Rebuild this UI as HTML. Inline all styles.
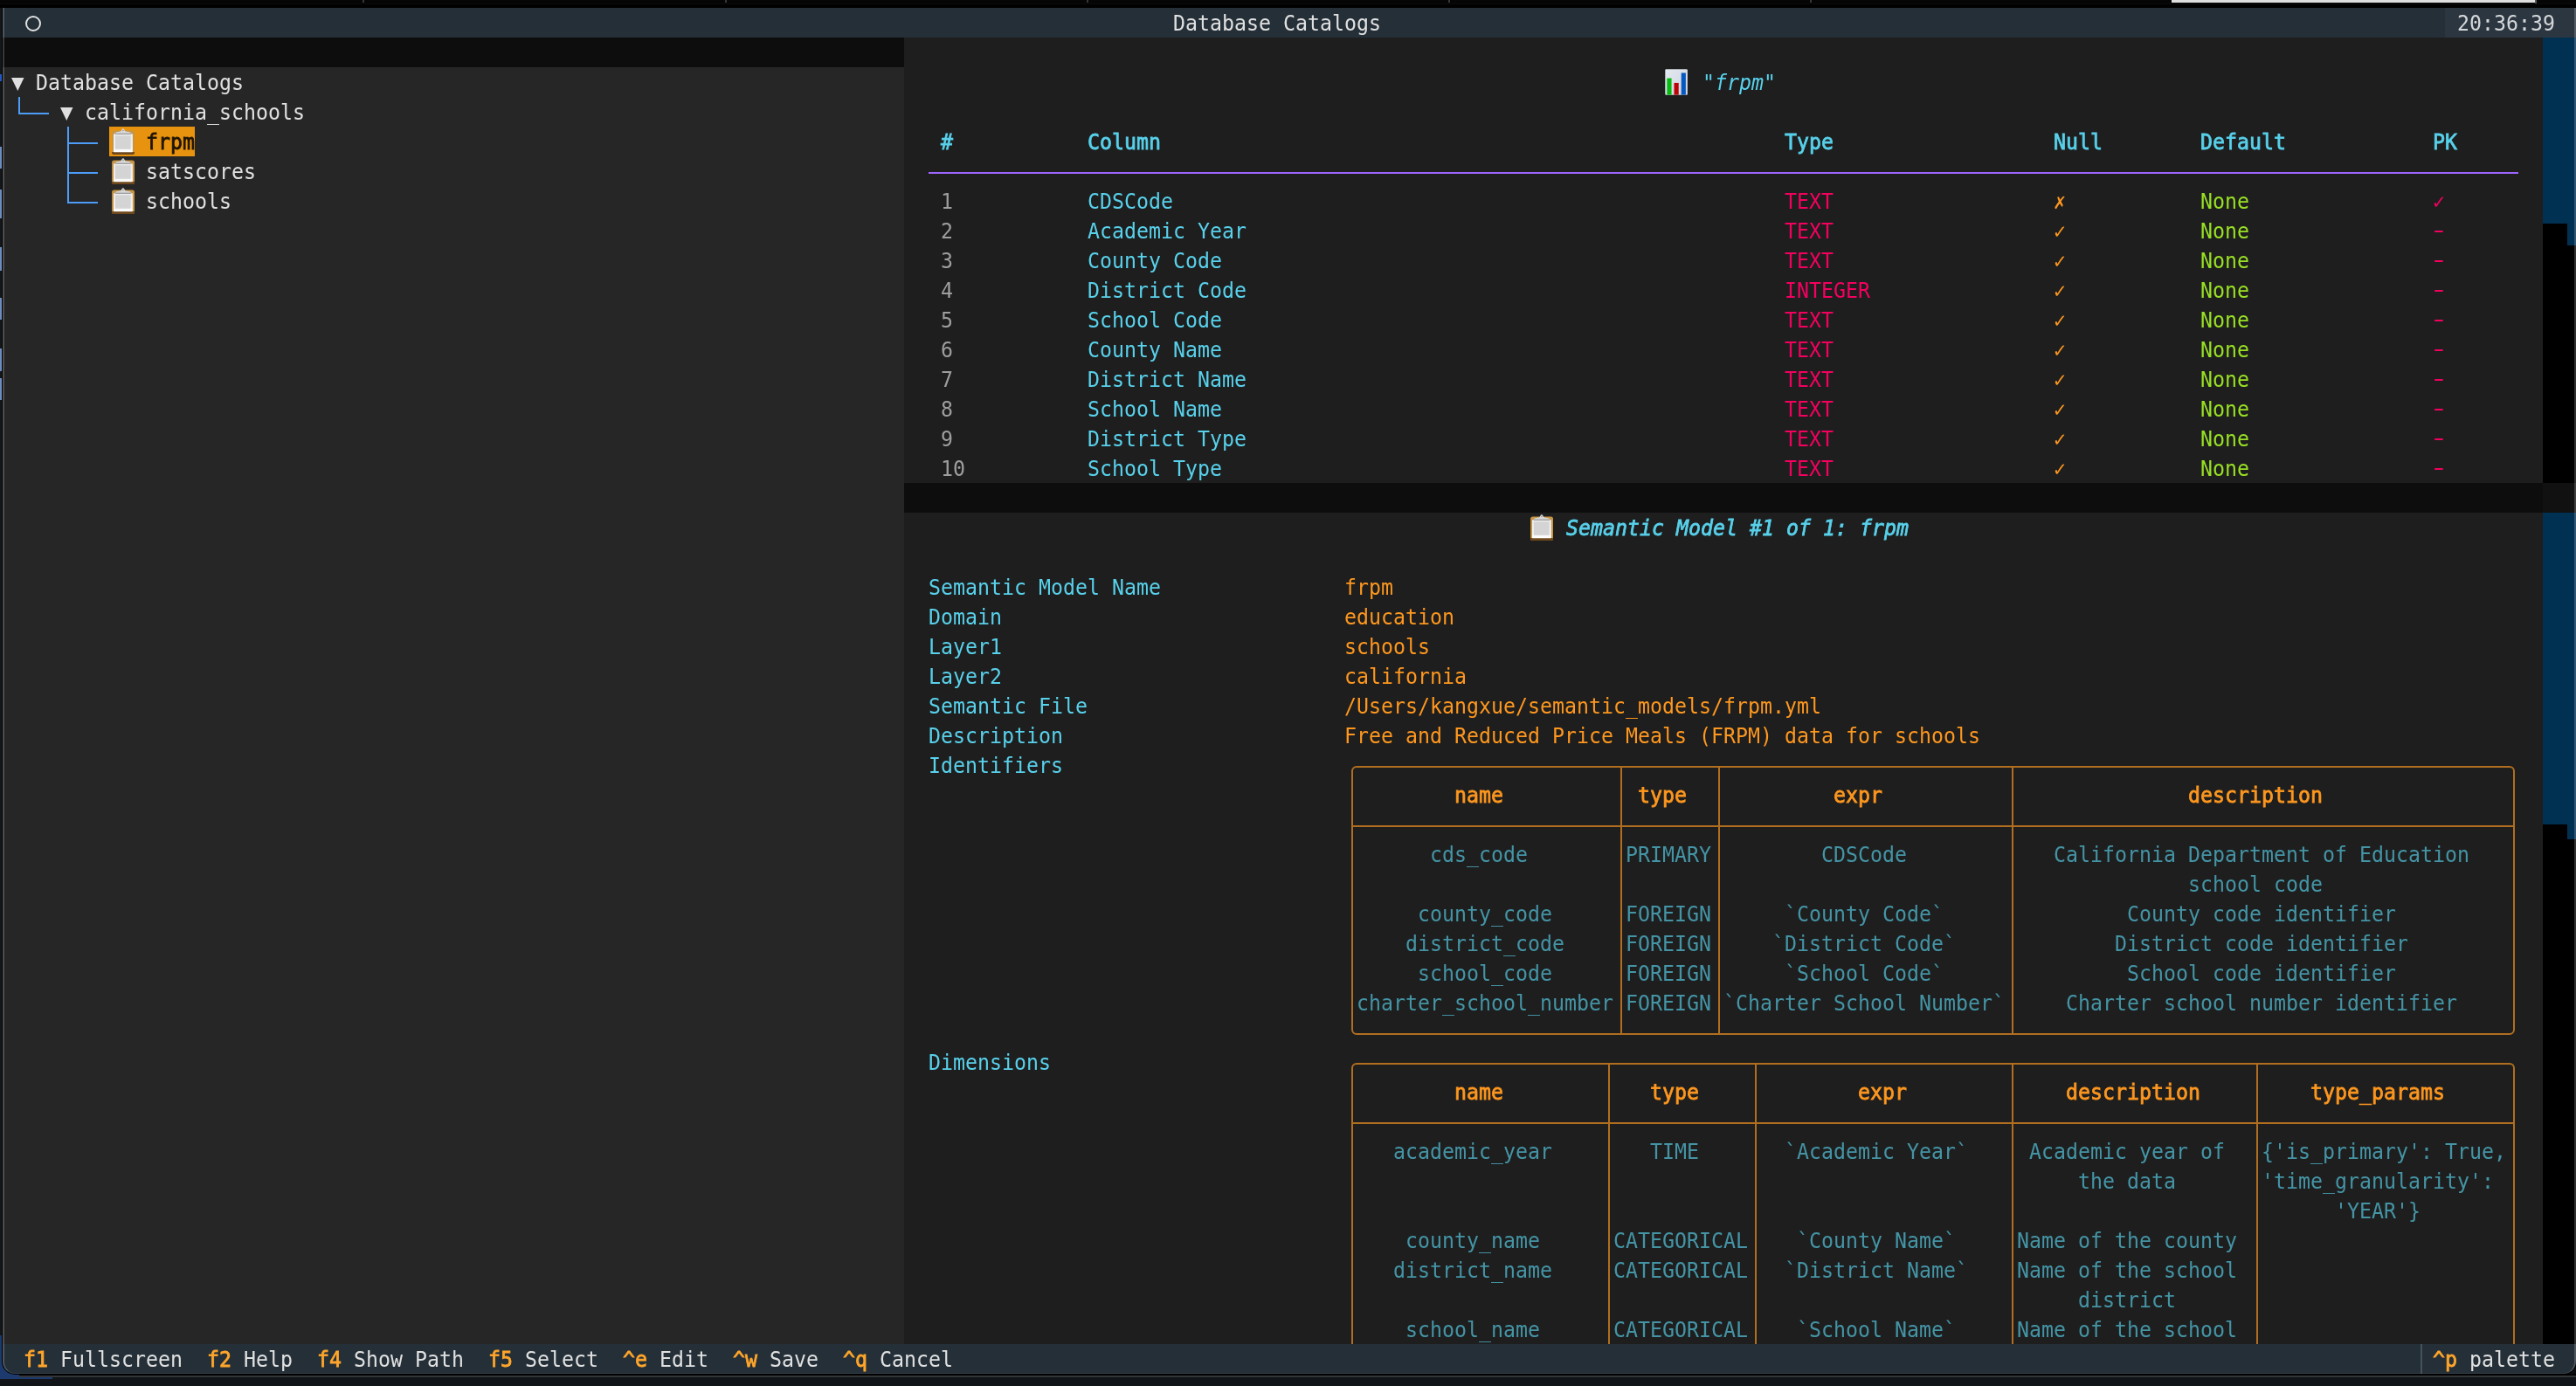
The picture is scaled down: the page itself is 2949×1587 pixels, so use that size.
<!DOCTYPE html>
<html lang="en"><head><meta charset="utf-8"><title>Database Catalogs</title>
<style>
html,body{margin:0;padding:0}
body{width:2949px;height:1587px;overflow:hidden;position:relative;background:#0c0d0f;font-family:"DejaVu Sans Mono", "Liberation Mono", monospace;font-size:23.25px}
.b{position:absolute;display:block}
#win{position:absolute;overflow:hidden;border-radius:0 0 14px 14px;box-shadow:0 0 0 1px #000}
#edge{position:absolute;left:0;top:-20px;right:0;bottom:0;border-radius:0 0 14px 14px;box-sizing:border-box;border:2px solid rgba(255,255,255,0.19);border-bottom-width:1px;border-bottom-color:rgba(255,255,255,0.08);pointer-events:none}
#txt{position:absolute;left:0;top:0;width:100%;height:100%;will-change:transform;transform:translateZ(0)}
.t{position:absolute;white-space:pre;height:34px;line-height:34px;letter-spacing:0.0px;margin-top:0.6px;font-kerning:none;font-variant-ligatures:none;transform:scaleY(1.04);transform-origin:0 25.2px}
.bd{font-weight:normal;-webkit-text-stroke:0.75px currentColor}
.i{font-style:italic}
.fg{color:#e0e0e0}
.fg2{color:#d4d7d9}
.dim{color:#9e9e9e}
.cy{color:#58d1eb}
.dc{color:#4494a5}
.mg{color:#f4005f}
.or{color:#fd971f}
.hd{color:#fd971f}
.ac{color:#ffa62b}
.gr{color:#98e024}
.hl{color:#1f1403;-webkit-text-stroke:0.75px currentColor}
.dash{transform:scaleX(1.6) scaleY(1.04) translateY(-1.2px);transform-origin:7px 25.2px}
</style></head>
<body>
<div class="b" style="left:0px;top:0px;width:2949px;height:1587px;background:#0c0d0f;"></div>
<div class="b" style="left:0px;top:0px;width:2949px;height:4px;background:#050505;"></div>
<div class="b" style="left:0px;top:4px;width:2949px;height:1px;background:#0b0b0b;"></div>
<div class="b" style="left:0px;top:5px;width:2949px;height:4px;background:#000;"></div>
<div class="b" style="left:415px;top:0px;width:2px;height:3px;background:#373737;"></div>
<div class="b" style="left:830px;top:0px;width:2px;height:3px;background:#373737;"></div>
<div class="b" style="left:1244px;top:0px;width:2px;height:3px;background:#373737;"></div>
<div class="b" style="left:1658px;top:0px;width:2px;height:3px;background:#373737;"></div>
<div class="b" style="left:2072px;top:0px;width:2px;height:3px;background:#373737;"></div>
<div class="b" style="left:2486px;top:0px;width:416px;height:3px;background:#dedede;"></div>
<div class="b" style="left:2902px;top:0px;width:2px;height:4px;background:#555;"></div>
<div class="b" style="left:0px;top:1573px;width:2949px;height:2px;background:#000;"></div>
<div class="b" style="left:0px;top:1575px;width:2949px;height:2px;background:#333536;"></div>
<div class="b" style="left:0px;top:1577px;width:2949px;height:10px;background:#111418;"></div>
<div class="b" style="left:0px;top:9px;width:3px;height:1520px;background:#14181b;"></div>
<div class="b" style="left:0px;top:1529px;width:3px;height:50px;background:#1d3a6e;"></div>
<div class="b" style="left:0px;top:85px;width:3px;height:8px;background:#2457c5;"></div>
<div class="b" style="left:0px;top:168px;width:3px;height:25px;background:#6f8cc0;"></div>
<div class="b" style="left:0px;top:217px;width:3px;height:33px;background:#6f8cc0;"></div>
<div class="b" style="left:0px;top:283px;width:3px;height:27px;background:#6f8cc0;"></div>
<div class="b" style="left:0px;top:341px;width:3px;height:25px;background:#6f8cc0;"></div>
<div class="b" style="left:0px;top:399px;width:3px;height:26px;background:#6f8cc0;"></div>
<div class="b" style="left:0px;top:433px;width:3px;height:25px;background:#6f8cc0;"></div>
<div class="b" style="left:0px;top:1555px;width:22px;height:24px;background:#1d3a6e;"></div>
<div class="b" style="left:0px;top:1577px;width:60px;height:2px;background:#1d3a6e;"></div>
<div id="win" style="left:3px;top:9px;width:2946px;height:1564px;background:#1e1e1e">
<div class="b" style="left:0px;top:0px;width:2946px;height:34px;background:#242f38;"></div>
<div class="b" style="left:2796px;top:0px;width:150px;height:34px;background:#2c3640;"></div>
<div class="b" style="left:0px;top:34px;width:1032px;height:34px;background:#0d0d0d;"></div>
<div class="b" style="left:0px;top:68px;width:1032px;height:1462px;background:#262626;"></div>
<div class="b" style="left:1032px;top:544px;width:1914px;height:34px;background:#0d0d0d;"></div>
<div class="b" style="left:2908px;top:544px;width:38px;height:34px;background:#111111;"></div>
<div class="b" style="left:2908px;top:34px;width:38px;height:510px;background:#000000;"></div>
<div class="b" style="left:2908px;top:34px;width:28px;height:212.5px;background:#003052;"></div>
<div class="b" style="left:2936px;top:34px;width:10px;height:238px;background:#003052;"></div>
<div class="b" style="left:2908px;top:578px;width:38px;height:952px;background:#000000;"></div>
<div class="b" style="left:2908px;top:578px;width:28px;height:356.5px;background:#003052;"></div>
<div class="b" style="left:2936px;top:578px;width:10px;height:374px;background:#003052;"></div>
<div class="b" style="left:0px;top:1530px;width:2946px;height:34px;background:#242f38;"></div>
<div class="b" style="left:25.5px;top:9px;width:18px;height:18px;box-sizing:border-box;border:2px solid #e0e0e0;border-radius:50%"></div>
<svg class="b" style="left:9.8px;top:80.1px" width="15" height="16" viewBox="0 0 15 16"><path d="M0 0H14.5L7.25 15Z" fill="#e0e0e0"/></svg>
<div class="b" style="left:18px;top:102px;width:2px;height:20px;background:#4d9cf7;"></div>
<div class="b" style="left:18px;top:120px;width:35px;height:2px;background:#4d9cf7;"></div>
<svg class="b" style="left:65.8px;top:114.1px" width="15" height="16" viewBox="0 0 15 16"><path d="M0 0H14.5L7.25 15Z" fill="#e0e0e0"/></svg>
<div class="b" style="left:74px;top:136px;width:2px;height:88px;background:#4d9cf7;"></div>
<div class="b" style="left:74px;top:154px;width:35px;height:2px;background:#4d9cf7;"></div>
<div class="b" style="left:74px;top:188px;width:35px;height:2px;background:#4d9cf7;"></div>
<div class="b" style="left:74px;top:222px;width:35px;height:2px;background:#4d9cf7;"></div>
<div class="b" style="left:122px;top:136px;width:98px;height:34px;background:#e8930f;"></div>
<svg class="b" style="left:125px;top:137.5px" width="27" height="31" viewBox="0 0 27 31"><defs><linearGradient id="pg8_4" x1="0" y1="0" x2="0" y2="1"><stop offset="0" stop-color="#ececec"/><stop offset="0.75" stop-color="#f2f2f2"/><stop offset="1" stop-color="#ffffff"/></linearGradient><linearGradient id="cg8_4" x1="0" y1="0" x2="0" y2="1"><stop offset="0" stop-color="#e3e6ea"/><stop offset="0.7" stop-color="#d2d5d9"/><stop offset="1" stop-color="#8d8986"/></linearGradient></defs><rect x="0.1" y="2.4" width="25.9" height="27.6" rx="2.6" fill="#c69545"/><path d="M0.1 27.1H26V27.4A2.6 2.6 0 0 1 23.4 30H2.7A2.6 2.6 0 0 1 0.1 27.4Z" fill="#6e481c"/><rect x="2" y="6.3" width="21.9" height="20.9" rx="0.6" fill="url(#pg8_4)"/><rect x="3.9" y="8.4" width="17.7" height="15.4" fill="#cfcfcf" opacity="0.85"/><path d="M4 7.1V5.6Q4 4.4 5.4 4.2L9.6 3.6Q10.6 3.4 11 2.4Q11.6 0.2 12.9 0.2Q14.2 0.2 14.8 2.4Q15.2 3.4 16.2 3.6L20.4 4.2Q21.9 4.4 21.9 5.6V7.1Z" fill="url(#cg8_4)"/><circle cx="12.9" cy="2.3" r="0.9" fill="#9a9da2"/></svg>
<svg class="b" style="left:125px;top:171.5px" width="27" height="31" viewBox="0 0 27 31"><defs><linearGradient id="pg8_5" x1="0" y1="0" x2="0" y2="1"><stop offset="0" stop-color="#ececec"/><stop offset="0.75" stop-color="#f2f2f2"/><stop offset="1" stop-color="#ffffff"/></linearGradient><linearGradient id="cg8_5" x1="0" y1="0" x2="0" y2="1"><stop offset="0" stop-color="#e3e6ea"/><stop offset="0.7" stop-color="#d2d5d9"/><stop offset="1" stop-color="#8d8986"/></linearGradient></defs><rect x="0.1" y="2.4" width="25.9" height="27.6" rx="2.6" fill="#c69545"/><path d="M0.1 27.1H26V27.4A2.6 2.6 0 0 1 23.4 30H2.7A2.6 2.6 0 0 1 0.1 27.4Z" fill="#6e481c"/><rect x="2" y="6.3" width="21.9" height="20.9" rx="0.6" fill="url(#pg8_5)"/><rect x="3.9" y="8.4" width="17.7" height="15.4" fill="#cfcfcf" opacity="0.85"/><path d="M4 7.1V5.6Q4 4.4 5.4 4.2L9.6 3.6Q10.6 3.4 11 2.4Q11.6 0.2 12.9 0.2Q14.2 0.2 14.8 2.4Q15.2 3.4 16.2 3.6L20.4 4.2Q21.9 4.4 21.9 5.6V7.1Z" fill="url(#cg8_5)"/><circle cx="12.9" cy="2.3" r="0.9" fill="#9a9da2"/></svg>
<svg class="b" style="left:125px;top:205.5px" width="27" height="31" viewBox="0 0 27 31"><defs><linearGradient id="pg8_6" x1="0" y1="0" x2="0" y2="1"><stop offset="0" stop-color="#ececec"/><stop offset="0.75" stop-color="#f2f2f2"/><stop offset="1" stop-color="#ffffff"/></linearGradient><linearGradient id="cg8_6" x1="0" y1="0" x2="0" y2="1"><stop offset="0" stop-color="#e3e6ea"/><stop offset="0.7" stop-color="#d2d5d9"/><stop offset="1" stop-color="#8d8986"/></linearGradient></defs><rect x="0.1" y="2.4" width="25.9" height="27.6" rx="2.6" fill="#c69545"/><path d="M0.1 27.1H26V27.4A2.6 2.6 0 0 1 23.4 30H2.7A2.6 2.6 0 0 1 0.1 27.4Z" fill="#6e481c"/><rect x="2" y="6.3" width="21.9" height="20.9" rx="0.6" fill="url(#pg8_6)"/><rect x="3.9" y="8.4" width="17.7" height="15.4" fill="#cfcfcf" opacity="0.85"/><path d="M4 7.1V5.6Q4 4.4 5.4 4.2L9.6 3.6Q10.6 3.4 11 2.4Q11.6 0.2 12.9 0.2Q14.2 0.2 14.8 2.4Q15.2 3.4 16.2 3.6L20.4 4.2Q21.9 4.4 21.9 5.6V7.1Z" fill="url(#cg8_6)"/><circle cx="12.9" cy="2.3" r="0.9" fill="#9a9da2"/></svg>
<svg class="b" style="left:1902.5px;top:69.5px" width="26.2" height="30.1" viewBox="0 0 27 31" preserveAspectRatio="none"><defs><linearGradient id="bc" x1="0" y1="0" x2="1" y2="1"><stop offset="0" stop-color="#e3e9f0"/><stop offset="1" stop-color="#cfd4df"/></linearGradient></defs><rect x="0.3" y="0.3" width="26.4" height="30.4" rx="1.2" fill="url(#bc)"/><rect x="2.4" y="10.9" width="5.4" height="19.6" fill="#06bb10"/><rect x="10.8" y="16.4" width="5.4" height="14.1" fill="#bb0404"/><rect x="19.3" y="4.6" width="5.3" height="25.9" fill="#0558c0"/></svg>
<div class="b" style="left:1060px;top:187.5px;width:1820px;height:2.5px;background:#9d65ff;"></div>
<svg class="b" style="left:1749px;top:579.5px" width="27" height="31" viewBox="0 0 27 31"><defs><linearGradient id="pg124_17" x1="0" y1="0" x2="0" y2="1"><stop offset="0" stop-color="#ececec"/><stop offset="0.75" stop-color="#f2f2f2"/><stop offset="1" stop-color="#ffffff"/></linearGradient><linearGradient id="cg124_17" x1="0" y1="0" x2="0" y2="1"><stop offset="0" stop-color="#e3e6ea"/><stop offset="0.7" stop-color="#d2d5d9"/><stop offset="1" stop-color="#8d8986"/></linearGradient></defs><rect x="0.1" y="2.4" width="25.9" height="27.6" rx="2.6" fill="#c69545"/><path d="M0.1 27.1H26V27.4A2.6 2.6 0 0 1 23.4 30H2.7A2.6 2.6 0 0 1 0.1 27.4Z" fill="#6e481c"/><rect x="2" y="6.3" width="21.9" height="20.9" rx="0.6" fill="url(#pg124_17)"/><rect x="3.9" y="8.4" width="17.7" height="15.4" fill="#cfcfcf" opacity="0.85"/><path d="M4 7.1V5.6Q4 4.4 5.4 4.2L9.6 3.6Q10.6 3.4 11 2.4Q11.6 0.2 12.9 0.2Q14.2 0.2 14.8 2.4Q15.2 3.4 16.2 3.6L20.4 4.2Q21.9 4.4 21.9 5.6V7.1Z" fill="url(#cg124_17)"/><circle cx="12.9" cy="2.3" r="0.9" fill="#9a9da2"/></svg>
<div class="b" style="left:1544px;top:868px;width:1332px;height:308px;box-sizing:border-box;border:2px solid #b16e1f;border-radius:6px 6px 6px 6px"></div>
<div class="b" style="left:1852px;top:868px;width:2px;height:308px;background:#b16e1f;"></div>
<div class="b" style="left:1964px;top:868px;width:2px;height:308px;background:#b16e1f;"></div>
<div class="b" style="left:2300px;top:868px;width:2px;height:308px;background:#b16e1f;"></div>
<div class="b" style="left:1544px;top:936px;width:1332px;height:2px;background:#b16e1f;"></div>
<div class="b" style="left:1544px;top:1208px;width:1332px;height:322px;box-sizing:border-box;border:2px solid #b16e1f;border-bottom:none;border-radius:6px 6px 0 0"></div>
<div class="b" style="left:1838px;top:1208px;width:2px;height:322px;background:#b16e1f;"></div>
<div class="b" style="left:2006px;top:1208px;width:2px;height:322px;background:#b16e1f;"></div>
<div class="b" style="left:2300px;top:1208px;width:2px;height:322px;background:#b16e1f;"></div>
<div class="b" style="left:2580px;top:1208px;width:2px;height:322px;background:#b16e1f;"></div>
<div class="b" style="left:1544px;top:1276px;width:1332px;height:2px;background:#b16e1f;"></div>
<div class="b" style="left:2768px;top:1530px;width:2px;height:34px;background:#44525d;"></div>
<div id="edge"></div>
<div id="txt">
<span class="t fg" style="left:1340px;top:0px">Database Catalogs</span>
<span class="t fg2" style="left:2810px;top:0px">20:36:39</span>
<span class="t fg" style="left:38px;top:68px">Database Catalogs</span>
<span class="t fg" style="left:94px;top:102px">california_schools</span>
<span class="t hl" style="left:164px;top:136px">frpm</span>
<span class="t fg" style="left:164px;top:170px">satscores</span>
<span class="t fg" style="left:164px;top:204px">schools</span>
<span class="t cy i" style="left:1946px;top:68px">"frpm"</span>
<span class="t cy bd" style="left:1074px;top:136px">#</span>
<span class="t cy bd" style="left:1242px;top:136px">Column</span>
<span class="t cy bd" style="left:2040px;top:136px">Type</span>
<span class="t cy bd" style="left:2348px;top:136px">Null</span>
<span class="t cy bd" style="left:2516px;top:136px">Default</span>
<span class="t cy bd" style="left:2782px;top:136px">PK</span>
<span class="t dim" style="left:1074px;top:204px">1</span>
<span class="t cy" style="left:1242px;top:204px">CDSCode</span>
<span class="t mg" style="left:2040px;top:204px">TEXT</span>
<span class="t or sym" style="left:2348px;top:204px">✗</span>
<span class="t gr" style="left:2516px;top:204px">None</span>
<span class="t mg sym" style="left:2782px;top:204px">✓</span>
<span class="t dim" style="left:1074px;top:238px">2</span>
<span class="t cy" style="left:1242px;top:238px">Academic Year</span>
<span class="t mg" style="left:2040px;top:238px">TEXT</span>
<span class="t or sym" style="left:2348px;top:238px">✓</span>
<span class="t gr" style="left:2516px;top:238px">None</span>
<span class="t mg dash" style="left:2782px;top:238px">-</span>
<span class="t dim" style="left:1074px;top:272px">3</span>
<span class="t cy" style="left:1242px;top:272px">County Code</span>
<span class="t mg" style="left:2040px;top:272px">TEXT</span>
<span class="t or sym" style="left:2348px;top:272px">✓</span>
<span class="t gr" style="left:2516px;top:272px">None</span>
<span class="t mg dash" style="left:2782px;top:272px">-</span>
<span class="t dim" style="left:1074px;top:306px">4</span>
<span class="t cy" style="left:1242px;top:306px">District Code</span>
<span class="t mg" style="left:2040px;top:306px">INTEGER</span>
<span class="t or sym" style="left:2348px;top:306px">✓</span>
<span class="t gr" style="left:2516px;top:306px">None</span>
<span class="t mg dash" style="left:2782px;top:306px">-</span>
<span class="t dim" style="left:1074px;top:340px">5</span>
<span class="t cy" style="left:1242px;top:340px">School Code</span>
<span class="t mg" style="left:2040px;top:340px">TEXT</span>
<span class="t or sym" style="left:2348px;top:340px">✓</span>
<span class="t gr" style="left:2516px;top:340px">None</span>
<span class="t mg dash" style="left:2782px;top:340px">-</span>
<span class="t dim" style="left:1074px;top:374px">6</span>
<span class="t cy" style="left:1242px;top:374px">County Name</span>
<span class="t mg" style="left:2040px;top:374px">TEXT</span>
<span class="t or sym" style="left:2348px;top:374px">✓</span>
<span class="t gr" style="left:2516px;top:374px">None</span>
<span class="t mg dash" style="left:2782px;top:374px">-</span>
<span class="t dim" style="left:1074px;top:408px">7</span>
<span class="t cy" style="left:1242px;top:408px">District Name</span>
<span class="t mg" style="left:2040px;top:408px">TEXT</span>
<span class="t or sym" style="left:2348px;top:408px">✓</span>
<span class="t gr" style="left:2516px;top:408px">None</span>
<span class="t mg dash" style="left:2782px;top:408px">-</span>
<span class="t dim" style="left:1074px;top:442px">8</span>
<span class="t cy" style="left:1242px;top:442px">School Name</span>
<span class="t mg" style="left:2040px;top:442px">TEXT</span>
<span class="t or sym" style="left:2348px;top:442px">✓</span>
<span class="t gr" style="left:2516px;top:442px">None</span>
<span class="t mg dash" style="left:2782px;top:442px">-</span>
<span class="t dim" style="left:1074px;top:476px">9</span>
<span class="t cy" style="left:1242px;top:476px">District Type</span>
<span class="t mg" style="left:2040px;top:476px">TEXT</span>
<span class="t or sym" style="left:2348px;top:476px">✓</span>
<span class="t gr" style="left:2516px;top:476px">None</span>
<span class="t mg dash" style="left:2782px;top:476px">-</span>
<span class="t dim" style="left:1074px;top:510px">10</span>
<span class="t cy" style="left:1242px;top:510px">School Type</span>
<span class="t mg" style="left:2040px;top:510px">TEXT</span>
<span class="t or sym" style="left:2348px;top:510px">✓</span>
<span class="t gr" style="left:2516px;top:510px">None</span>
<span class="t mg dash" style="left:2782px;top:510px">-</span>
<span class="t cy bd i" style="left:1790px;top:578px">Semantic Model #1 of 1: frpm</span>
<span class="t cy" style="left:1060px;top:646px">Semantic Model Name</span>
<span class="t or" style="left:1536px;top:646px">frpm</span>
<span class="t cy" style="left:1060px;top:680px">Domain</span>
<span class="t or" style="left:1536px;top:680px">education</span>
<span class="t cy" style="left:1060px;top:714px">Layer1</span>
<span class="t or" style="left:1536px;top:714px">schools</span>
<span class="t cy" style="left:1060px;top:748px">Layer2</span>
<span class="t or" style="left:1536px;top:748px">california</span>
<span class="t cy" style="left:1060px;top:782px">Semantic File</span>
<span class="t or" style="left:1536px;top:782px">/Users/kangxue/semantic_models/frpm.yml</span>
<span class="t cy" style="left:1060px;top:816px">Description</span>
<span class="t or" style="left:1536px;top:816px">Free and Reduced Price Meals (FRPM) data for schools</span>
<span class="t cy" style="left:1060px;top:850px">Identifiers</span>
<span class="t cy" style="left:1060px;top:1190px">Dimensions</span>
<span class="t hd bd" style="left:1662px;top:884px">name</span>
<span class="t hd bd" style="left:1872px;top:884px">type</span>
<span class="t hd bd" style="left:2096px;top:884px">expr</span>
<span class="t hd bd" style="left:2502px;top:884px">description</span>
<span class="t dc" style="left:1634px;top:952px">cds_code</span>
<span class="t dc" style="left:1858px;top:952px">PRIMARY</span>
<span class="t dc" style="left:2082px;top:952px">CDSCode</span>
<span class="t dc" style="left:2348px;top:952px">California Department of Education</span>
<span class="t dc" style="left:2502px;top:986px">school code</span>
<span class="t dc" style="left:1620px;top:1020px">county_code</span>
<span class="t dc" style="left:1858px;top:1020px">FOREIGN</span>
<span class="t dc" style="left:2040px;top:1020px">`County Code`</span>
<span class="t dc" style="left:2432px;top:1020px">County code identifier</span>
<span class="t dc" style="left:1606px;top:1054px">district_code</span>
<span class="t dc" style="left:1858px;top:1054px">FOREIGN</span>
<span class="t dc" style="left:2026px;top:1054px">`District Code`</span>
<span class="t dc" style="left:2418px;top:1054px">District code identifier</span>
<span class="t dc" style="left:1620px;top:1088px">school_code</span>
<span class="t dc" style="left:1858px;top:1088px">FOREIGN</span>
<span class="t dc" style="left:2040px;top:1088px">`School Code`</span>
<span class="t dc" style="left:2432px;top:1088px">School code identifier</span>
<span class="t dc" style="left:1550px;top:1122px">charter_school_number</span>
<span class="t dc" style="left:1858px;top:1122px">FOREIGN</span>
<span class="t dc" style="left:1970px;top:1122px">`Charter School Number`</span>
<span class="t dc" style="left:2362px;top:1122px">Charter school number identifier</span>
<span class="t hd bd" style="left:1662px;top:1224px">name</span>
<span class="t hd bd" style="left:1886px;top:1224px">type</span>
<span class="t hd bd" style="left:2124px;top:1224px">expr</span>
<span class="t hd bd" style="left:2362px;top:1224px">description</span>
<span class="t hd bd" style="left:2642px;top:1224px">type_params</span>
<span class="t dc" style="left:1592px;top:1292px">academic_year</span>
<span class="t dc" style="left:1886px;top:1292px">TIME</span>
<span class="t dc" style="left:2040px;top:1292px">`Academic Year`</span>
<span class="t dc" style="left:2320px;top:1292px">Academic year of</span>
<span class="t dc" style="left:2586px;top:1292px">{'is_primary': True,</span>
<span class="t dc" style="left:2376px;top:1326px">the data</span>
<span class="t dc" style="left:2586px;top:1326px">'time_granularity':</span>
<span class="t dc" style="left:2670px;top:1360px">'YEAR'}</span>
<span class="t dc" style="left:1606px;top:1394px">county_name</span>
<span class="t dc" style="left:1844px;top:1394px">CATEGORICAL</span>
<span class="t dc" style="left:2054px;top:1394px">`County Name`</span>
<span class="t dc" style="left:2306px;top:1394px">Name of the county</span>
<span class="t dc" style="left:1592px;top:1428px">district_name</span>
<span class="t dc" style="left:1844px;top:1428px">CATEGORICAL</span>
<span class="t dc" style="left:2040px;top:1428px">`District Name`</span>
<span class="t dc" style="left:2306px;top:1428px">Name of the school</span>
<span class="t dc" style="left:2376px;top:1462px">district</span>
<span class="t dc" style="left:1606px;top:1496px">school_name</span>
<span class="t dc" style="left:1844px;top:1496px">CATEGORICAL</span>
<span class="t dc" style="left:2054px;top:1496px">`School Name`</span>
<span class="t dc" style="left:2306px;top:1496px">Name of the school</span>
<span class="t ac bd" style="left:24px;top:1530px">f1</span>
<span class="t fg" style="left:66px;top:1530px">Fullscreen</span>
<span class="t ac bd" style="left:234px;top:1530px">f2</span>
<span class="t fg" style="left:276px;top:1530px">Help</span>
<span class="t ac bd" style="left:360px;top:1530px">f4</span>
<span class="t fg" style="left:402px;top:1530px">Show Path</span>
<span class="t ac bd" style="left:556px;top:1530px">f5</span>
<span class="t fg" style="left:598px;top:1530px">Select</span>
<span class="t ac bd" style="left:710px;top:1530px">^e</span>
<span class="t fg" style="left:752px;top:1530px">Edit</span>
<span class="t ac bd" style="left:836px;top:1530px">^w</span>
<span class="t fg" style="left:878px;top:1530px">Save</span>
<span class="t ac bd" style="left:962px;top:1530px">^q</span>
<span class="t fg" style="left:1004px;top:1530px">Cancel</span>
<span class="t ac bd" style="left:2782px;top:1530px">^p</span>
<span class="t fg" style="left:2824px;top:1530px">palette</span>
</div>
</div>
</body></html>
